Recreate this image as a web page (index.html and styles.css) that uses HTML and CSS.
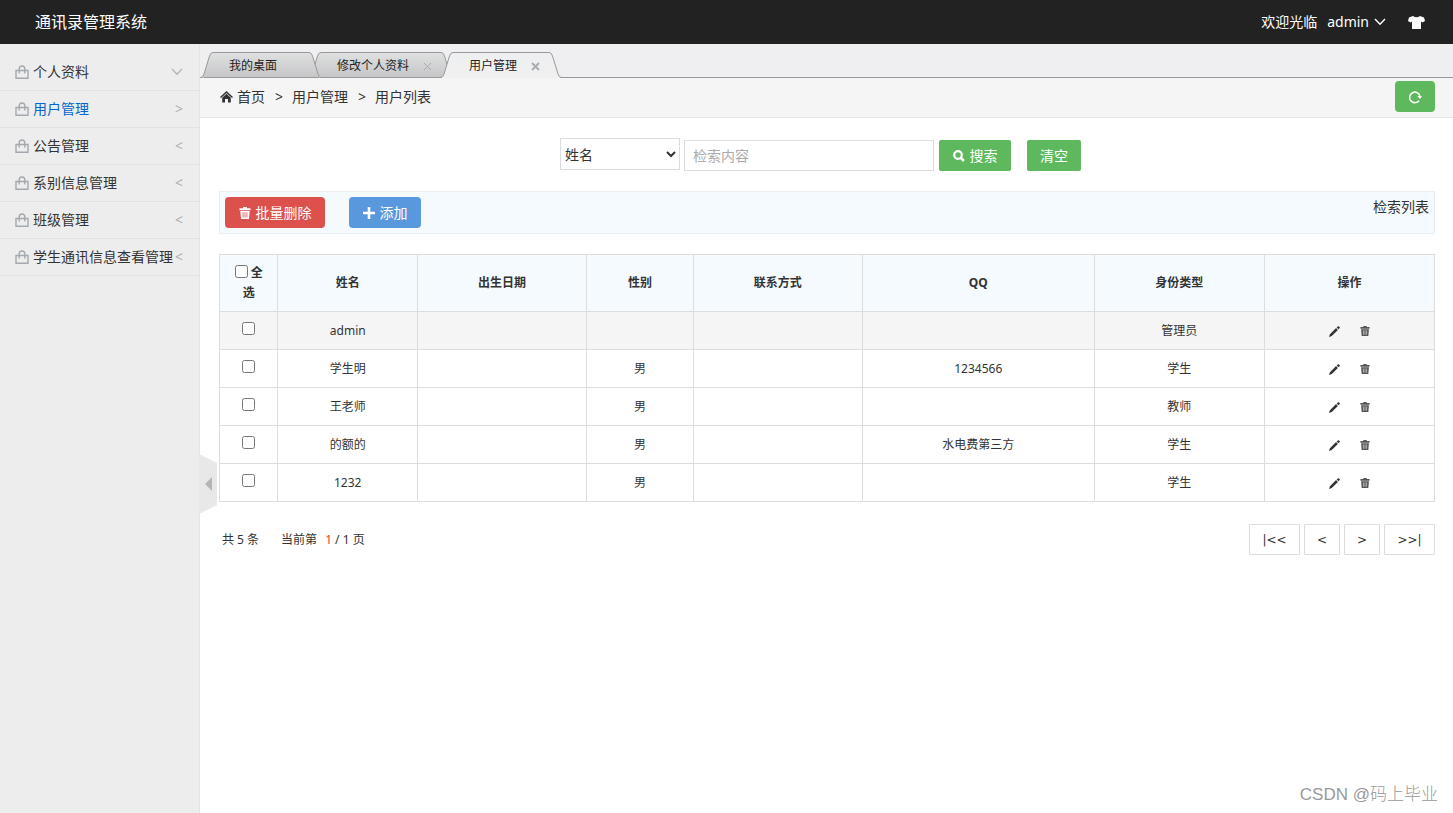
FILE: index.html
```html
<!DOCTYPE html>
<html lang="zh-CN">
<head>
<meta charset="utf-8">
<title>通讯录管理系统</title>
<link rel="stylesheet" href="styles.css">
</head>
<body>
<svg class="defs" aria-hidden="true">
  <defs>
    <linearGradient id="tab-grey" x1="0" y1="0" x2="0" y2="1"><stop offset="0" stop-color="#dfe0e0"/><stop offset="1" stop-color="#c6c6c8"/></linearGradient>
    <linearGradient id="tab-light" x1="0" y1="0" x2="0" y2="1"><stop offset="0" stop-color="#eeeff0"/><stop offset="1" stop-color="#f0f0f1"/></linearGradient>
    <symbol id="bag" viewBox="0 0 14 14"><path d="M1 5.500h12v7.700H1zM4.200 8.500V4Q4.200 1 7 1t2.800 3V8.500" fill="none" stroke="currentColor" stroke-width="1.400"/></symbol>
    <symbol id="chevron" viewBox="0 0 12 8"><path d="M1 1l5 5.200L11 1" fill="none" stroke="currentColor" stroke-width="1.400"/></symbol>
    <symbol id="trash" viewBox="0 0 12 12"><path d="M4 0h4v1.300h3.500v1.900H.5V1.300H4z"/><path d="M1.300 3.900h9.400L10 12H2z"/><path d="M4 5.300l.2 5.200M6 5.300v5.200M8 5.300l-.2 5.200" fill="none" stroke="var(--slot)" stroke-width=".8"/></symbol>
    <symbol id="pencil" viewBox="0 0 12 12"><path d="M0 12l1-3 6.700-6.700 2 2L3 11zM8.400 1.600L9.500.5q.7-.6 1.400 0l.6.600q.6.700 0 1.400l-1.100 1.100z"/></symbol>
  </defs>
</svg>

<header class="topbar">
  <h1 class="brand">通讯录管理系统</h1>
  <div class="account">
    <span>欢迎光临</span>
    <button class="account-menu" type="button">admin <svg class="chevron"><use href="#chevron"/></svg></button>
    <button class="skin" type="button" aria-label="换肤"><svg class="shirt" viewBox="0 0 17 13"><path d="M5 0q3.500 2.400 7 0l4 1.500 1 3.500-2.600 1.500L13 5.500V13H4V5.500L2.600 6.500 0 5 1 1.500z"/></svg></button>
  </div>
</header>

<div class="layout">
  <aside class="sidebar">
    <nav>
      <a class="menu-item" href="#"><svg class="bag"><use href="#bag"/></svg><span class="menu-text">个人资料</span><svg class="chevron menu-chevron"><use href="#chevron"/></svg></a>
      <a class="menu-item current" href="#"><svg class="bag"><use href="#bag"/></svg><span class="menu-text">用户管理</span><span class="arrow">&gt;</span></a>
      <a class="menu-item" href="#"><svg class="bag"><use href="#bag"/></svg><span class="menu-text">公告管理</span><span class="arrow">&lt;</span></a>
      <a class="menu-item" href="#"><svg class="bag"><use href="#bag"/></svg><span class="menu-text">系别信息管理</span><span class="arrow">&lt;</span></a>
      <a class="menu-item" href="#"><svg class="bag"><use href="#bag"/></svg><span class="menu-text">班级管理</span><span class="arrow">&lt;</span></a>
      <a class="menu-item" href="#"><svg class="bag"><use href="#bag"/></svg><span class="menu-text">学生通讯信息查看管理</span><span class="arrow">&lt;</span></a>
    </nav>
    <button class="collapse" type="button" aria-label="收起菜单"><svg class="collapse-shape" viewBox="0 0 18 60"><path d="M0 0l18 9v42L0 60z" fill="#e8e8e8"/><path d="M13 23v14l-7-7z" fill="#b5b5b5"/></svg></button>
  </aside>

  <main class="main">
    <div class="tabs">
      <div class="tab first">
        <svg class="cap" viewBox="0 0 12 26"><path d="M0 26Q2 25 3 22L8.500 4Q9.500.5 12 .5V26z" fill="url(#tab-grey)"/><path d="M0 25.500Q2 25 3 22L8.500 4Q9.500.5 12 .5M3 25.500h9" class="edge"/></svg>
        <span class="tab-body"><a href="#">我的桌面</a></span>
        <svg class="cap" viewBox="0 0 12 26"><path d="M12 26Q10 25 9 22L3.500 4Q2.500.5 0 .5V26z" fill="url(#tab-grey)"/><path d="M12 25.500Q10 25 9 22L3.500 4Q2.500.5 0 .5M0 25.500h10" class="edge"/></svg>
      </div>
      <div class="tab">
        <svg class="cap" viewBox="0 0 12 26"><path d="M0 26Q2 25 3 22L8.500 4Q9.500.5 12 .5V26z" fill="url(#tab-grey)"/><path d="M0 25.500Q2 25 3 22L8.500 4Q9.500.5 12 .5M3 25.500h9" class="edge"/></svg>
        <span class="tab-body"><a href="#">修改个人资料</a><button class="close" type="button" aria-label="关闭"><svg class="cross" viewBox="0 0 9 9"><path d="M1 1l7 7M8 1L1 8"/></svg></button></span>
        <svg class="cap" viewBox="0 0 12 26"><path d="M12 26Q10 25 9 22L3.500 4Q2.500.5 0 .5V26z" fill="url(#tab-grey)"/><path d="M12 25.500Q10 25 9 22L3.500 4Q2.500.5 0 .5M0 25.500h10" class="edge"/></svg>
      </div>
      <div class="tab active">
        <svg class="cap" viewBox="0 0 12 26"><path d="M0 26Q2 25 3 22L8.500 4Q9.500.5 12 .5V26z" fill="url(#tab-light)"/><path d="M0 25.500Q2 25 3 22L8.500 4Q9.500.5 12 .5" class="edge"/></svg>
        <span class="tab-body"><a href="#">用户管理</a><button class="close" type="button" aria-label="关闭"><svg class="cross" viewBox="0 0 9 9"><path d="M1 1l7 7M8 1L1 8"/></svg></button></span>
        <svg class="cap" viewBox="0 0 12 26"><path d="M12 26Q10 25 9 22L3.500 4Q2.500.5 0 .5V26z" fill="url(#tab-light)"/><path d="M12 25.500Q10 25 9 22L3.500 4Q2.500.5 0 .5" class="edge"/></svg>
      </div>
    </div>

    <div class="crumbs">
      <svg class="home" viewBox="0 0 13 12"><path d="M6.500 0L13 6l-1 1-5.500-5L1 7 0 6z"/><path d="M6.500 2.700l4.300 4V11.500H8V8H5v3.500H2.200V6.700z"/></svg>
      <span>首页</span><span class="sep">&gt;</span><span>用户管理</span><span class="sep">&gt;</span><span>用户列表</span>
      <button class="btn green refresh" type="button" aria-label="刷新"><svg class="reload" viewBox="0 0 14 14"><path d="M11 10.800A5.300 5.300 0 1 1 12 6" fill="none" stroke="#fff" stroke-width="1.500"/><path d="M9.300 6H14l-2 3z" fill="#fff"/></svg></button>
    </div>

    <div class="content">
      <form class="search">
        <select class="field" aria-label="检索字段"><option>姓名</option></select>
        <input class="keyword" type="text" placeholder="检索内容" aria-label="检索内容">
        <button class="btn green square find" type="button"><svg class="icon" viewBox="0 0 12 12"><circle cx="5" cy="5" r="3.800" fill="none" stroke="#fff" stroke-width="2.200"/><path d="M7.800 7.800l3.200 3.200" stroke="#fff" stroke-width="2.600"/></svg>搜索</button>
        <button class="btn green square clear" type="reset">清空</button>
      </form>

      <div class="toolbar">
        <button class="btn red" type="button"><svg class="icon"><use href="#trash"/></svg>批量删除</button>
        <button class="btn blue" type="button"><svg class="icon" viewBox="0 0 12 12"><path d="M6 0v12M0 6h12" stroke="#fff" stroke-width="2.600"/></svg>添加</button>
        <span class="toolbar-title">检索列表</span>
      </div>

      <table class="users">
        <colgroup><col class="c-check"><col class="c-name"><col class="c-date"><col class="c-sex"><col class="c-date"><col class="c-qq"><col class="c-type"><col class="c-type"></colgroup>
        <thead>
          <tr><th class="all"><label><input class="tick" type="checkbox"> 全选</label></th><th>姓名</th><th>出生日期</th><th>性别</th><th>联系方式</th><th>QQ</th><th>身份类型</th><th>操作</th></tr>
        </thead>
        <tbody>
          <tr class="hover"><td><input class="tick" type="checkbox" aria-label="admin"></td><td>admin</td><td></td><td></td><td></td><td></td><td>管理员</td><td><a class="act" href="#" aria-label="编辑"><svg class="act-icon"><use href="#pencil"/></svg></a><a class="act" href="#" aria-label="删除"><svg class="act-icon bin"><use href="#trash"/></svg></a></td></tr>
          <tr><td><input class="tick" type="checkbox" aria-label="学生明"></td><td>学生明</td><td></td><td>男</td><td></td><td>1234566</td><td>学生</td><td><a class="act" href="#" aria-label="编辑"><svg class="act-icon"><use href="#pencil"/></svg></a><a class="act" href="#" aria-label="删除"><svg class="act-icon bin"><use href="#trash"/></svg></a></td></tr>
          <tr><td><input class="tick" type="checkbox" aria-label="王老师"></td><td>王老师</td><td></td><td>男</td><td></td><td></td><td>教师</td><td><a class="act" href="#" aria-label="编辑"><svg class="act-icon"><use href="#pencil"/></svg></a><a class="act" href="#" aria-label="删除"><svg class="act-icon bin"><use href="#trash"/></svg></a></td></tr>
          <tr><td><input class="tick" type="checkbox" aria-label="的额的"></td><td>的额的</td><td></td><td>男</td><td></td><td>水电费第三方</td><td>学生</td><td><a class="act" href="#" aria-label="编辑"><svg class="act-icon"><use href="#pencil"/></svg></a><a class="act" href="#" aria-label="删除"><svg class="act-icon bin"><use href="#trash"/></svg></a></td></tr>
          <tr><td><input class="tick" type="checkbox" aria-label="1232"></td><td>1232</td><td></td><td>男</td><td></td><td></td><td>学生</td><td><a class="act" href="#" aria-label="编辑"><svg class="act-icon"><use href="#pencil"/></svg></a><a class="act" href="#" aria-label="删除"><svg class="act-icon bin"><use href="#trash"/></svg></a></td></tr>
        </tbody>
      </table>

      <div class="pager">
        <span>共 5 条</span>
        <span class="page-now"><span>当前第</span><span><span class="num">1</span> / 1 页</span></span>
        <div class="page-buttons">
          <button class="page wide" type="button">|&lt;&lt;</button>
          <button class="page" type="button">&lt;</button>
          <button class="page" type="button">&gt;</button>
          <button class="page wide" type="button">&gt;&gt;|</button>
        </div>
      </div>
    </div>
  </main>
</div>
<div class="watermark">CSDN @码上毕业</div>
</body>
</html>
```
FILE: styles.css
```css
* { box-sizing: border-box; }
body {
  margin: 0;
  min-height: 100vh;
  display: flex;
  flex-direction: column;
  font: 14px/20px "Noto Sans", "Noto Sans CJK SC", sans-serif;
  color: #333;
  background: #fff;
}
button, input, select { font: inherit; color: inherit; margin: 0; }
button { border: 0; padding: 0; background: none; cursor: pointer; }
a { color: inherit; text-decoration: none; }
svg { display: block; flex: none; fill: currentColor; }
.defs { position: absolute; width: 0; height: 0; }

.topbar {
  display: flex;
  justify-content: space-between;
  align-items: center;
  height: 44px;
  padding: 0 28px 0 35px;
  background: #222;
  color: #fff;
}
.brand { margin: 0; font-size: 16px; font-weight: 400; }
.account { display: flex; align-items: center; gap: 10px; }
.account-menu { display: flex; align-items: center; gap: 5px; }
.chevron { width: 12px; height: 8px; }
.skin { margin-left: 12px; }
.shirt { width: 17px; height: 13px; }

.layout { display: flex; flex: 1; }
.sidebar {
  position: relative;
  width: 200px;
  flex: none;
  padding-top: 10px;
  background: #ededed;
  border-right: 1px solid #e3e3e3;
}
.menu-item {
  display: flex;
  align-items: center;
  height: 37px;
  padding: 0 16px 0 15px;
  border-bottom: 1px solid #e2e2e2;
}
.current { color: #06c; }
.bag { width: 14px; height: 14px; margin-right: 4px; color: #a4a9b0; }
.menu-text { white-space: nowrap; }
.arrow { margin-left: auto; color: #b0b0b0; }
.menu-chevron { margin-left: auto; color: #b6b6b6; }
.collapse { position: absolute; left: 100%; top: 410px; z-index: 2; }
.collapse-shape { width: 18px; height: 60px; }

.main { flex: 1; min-width: 0; }
.tabs {
  display: flex;
  align-items: flex-end;
  height: 34px;
  padding-left: 1px;
  background: linear-gradient(#efeff1, #efeff1) no-repeat 0 0 / 100% 33px, #999;
  font-size: 12px;
}
.tab { display: flex; position: relative; height: 26px; margin-right: -12px; color: #222; }
.first { z-index: 1; }
.active { z-index: 2; }
.cap { width: 12px; height: 26px; }
.edge { fill: none; stroke: #999; }
.tab-body {
  display: flex;
  align-items: center;
  gap: 14px;
  padding: 2px 9px 0 16px;
  border-top: 1px solid #999;
  border-bottom: 1px solid #999;
  background: linear-gradient(#dfe0e0, #c6c6c8);
}
.first .tab-body { padding-right: 32px; }
.active .tab-body { background: linear-gradient(#eeeff0, #f0f0f1); border-bottom-color: #f0f0f1; }
.cross { width: 9px; height: 9px; stroke: #a9adb2; stroke-width: 1; }
.active .cross { stroke-width: 2; }

.crumbs {
  display: flex;
  align-items: center;
  height: 40px;
  padding: 0 18px 2px 20px;
  background: #f5f5f5;
  border-bottom: 1px solid #e5e5e5;
}
.home { width: 13px; height: 12px; margin-right: 4px; }
.sep { margin: 0 9px 0 10px; }
.refresh { width: 40px; margin-left: auto; }
.reload { width: 14px; height: 14px; }

.btn {
  display: flex;
  align-items: center;
  justify-content: center;
  gap: 5px;
  height: 31px;
  padding: 0 13px;
  border-radius: 4px;
  color: #fff;
}
.green { background: #5eb95e; }
.red { width: 100px; background: #dd514c; --slot: #dd514c; }
.blue { width: 72px; background: #5a98de; }
.square { border-radius: 2px; }
.find { width: 72px; margin-left: 1px; }
.icon { width: 12px; height: 12px; }

.content { padding: 20px 18px 20px 19px; }
.search {
  display: flex;
  justify-content: center;
  align-items: flex-end;
  gap: 4px;
  padding-right: 13px;
}
.field {
  align-self: flex-start;
  width: 120px;
  height: 32px;
  border: 1px solid #ddd;
  background: #fff;
}
.keyword {
  width: 250px;
  height: 31px;
  margin-top: 2px;
  padding: 0 8px;
  border: 1px solid #ddd;
  background: #fff;
}
.keyword::placeholder { color: #aaa; }
.clear { margin-left: 12px; }

.toolbar {
  display: flex;
  gap: 24px;
  margin-top: 20px;
  padding: 5px;
  height: 43px;
  border: 1px solid #e8eef2;
  background: #f5fafe;
}
.toolbar-title { margin-left: auto; }

.users {
  width: 100%;
  margin-top: 20px;
  table-layout: fixed;
  border-collapse: collapse;
  font-size: 12px;
  text-align: center;
}
.users th, .users td { height: 38px; padding: 8px; border: 1px solid #ddd; }
.users th { height: 57px; background: #f5fafe; font-weight: 700; }
.users .all { padding: 8px 12px; }
.hover { background: #f5f5f5; }
.c-check { width: 56px; }
.c-name { width: 11.5%; }
.c-date { width: 13.9%; }
.c-sex { width: 8.8%; }
.c-qq { width: 19.1%; }
.c-type { width: 14%; }
.tick { width: 13px; height: 13px; vertical-align: -1px; }
td .tick { display: block; margin: 0 auto 4px; }
.act { display: inline-block; margin: 0 10px; vertical-align: middle; --slot: #ddd; }
.act-icon { width: 11px; height: 11px; }
.bin { width: 10px; height: 10px; color: #555; }

.pager { display: flex; align-items: center; gap: 22px; margin-top: 22px; padding-left: 3px; font-size: 12px; }
.page-now { display: flex; gap: 8px; }
.num { color: #f33; }
.page-buttons { display: flex; gap: 4px; margin-left: auto; }
.page { width: 36px; height: 31px; border: 1px solid #ddd; border-radius: 1px; background: #fff; font-family: "DejaVu Sans", sans-serif; }
.wide { width: 51px; }

.watermark { position: absolute; right: 15px; bottom: 6px; font: 300 17px/24px "Liberation Sans", "Noto Sans CJK SC", sans-serif; color: #999; }
```
